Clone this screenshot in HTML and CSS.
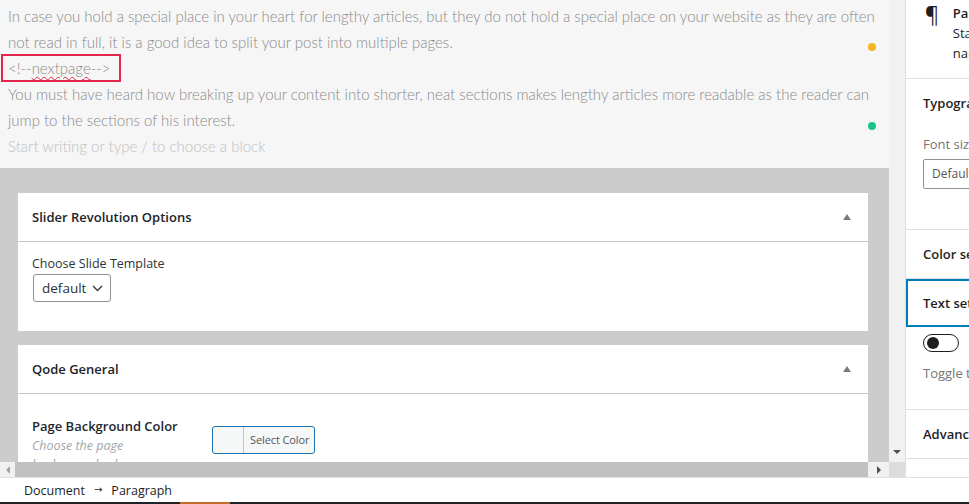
FILE: index.html
```html
<!DOCTYPE html>
<html lang="en">
<head>
    <meta charset="UTF-8"/>
    <meta name="viewport" content="width=device-width,initial-scale=1"/>
    <title>Edit Post</title>
    <link rel="stylesheet" href="styles.css">
</head>
<body>
<div class="workspace">
    <div class="editor">
        <div class="canvas">
            <div class="post">
                <p>In case you hold a special place in your heart for lengthy articles, but they do not hold a special place on your website as they are often not read in full, it is a good idea to split your post into multiple pages.</p>
                <p><span class="more">&lt;!--<span class="typo">nextpage</span>--&gt;</span></p>
                <p>You must have heard how breaking up your content into shorter, neat sections makes lengthy articles more readable as the reader can jump to the sections of his interest.</p>
                <p class="placeholder">Start writing or type / to choose a block</p>
                <span class="dot dot-orange"></span>
                <span class="dot dot-green"></span>
            </div>
            <div class="metaboxes">
                <section class="metabox">
                    <header class="metabox-head">
                        <h2>Slider Revolution Options</h2>
                        <span class="caret"></span>
                    </header>
                    <div class="metabox-body">
                        <div class="field-label">Choose Slide Template</div>
                        <div class="select">
                            default
                            <svg width="11" height="7" viewBox="0 0 11 7"><path d="M1 1l4.5 4.5L10 1" fill="none" stroke="#3c434a" stroke-width="1.5"/></svg>
                        </div>
                    </div>
                </section>
                <section class="metabox">
                    <header class="metabox-head">
                        <h2>Qode General</h2>
                        <span class="caret"></span>
                    </header>
                    <div class="metabox-body option-row">
                        <div class="option-label">
                            <div class="option-title">Page Background Color</div>
                            <div class="option-desc">Choose the page background color</div>
                        </div>
                        <div class="color-btn">
                            <span class="swatch"></span>
                            <span class="color-text">Select Color</span>
                        </div>
                    </div>
                </section>
            </div>
        </div>
        <div class="vscroll">
            <span class="arrow arrow-down"></span>
        </div>
        <div class="hscroll">
            <span class="hbtn"><span class="arrow arrow-left"></span></span>
            <span class="thumb"></span>
            <span class="hbtn"><span class="arrow arrow-right"></span></span>
        </div>
        <div class="corner"></div>
    </div>

    <aside class="sidebar">
        <div class="block-card">
            <span class="pilcrow">&para;</span>
            <div>
                <div class="block-name">Paragraph</div>
                <div class="block-desc">Start with the building block of all narrative.</div>
            </div>
        </div>
        <div class="panel">
            <div class="panel-head">Typography</div>
            <div class="panel-body typo-body">
                <div class="muted">Font size</div>
                <div class="size-select">Default</div>
            </div>
        </div>
        <div class="panel">
            <div class="panel-head">Color settings</div>
        </div>
        <div class="panel">
            <div class="panel-head is-focused">Text settings</div>
            <div class="panel-body text-body">
                <div class="toggle-row">
                    <span class="toggle"><span class="knob"></span></span>
                    <span>Drop cap</span>
                </div>
                <div class="muted">Toggle to show a large initial letter.</div>
            </div>
        </div>
        <div class="panel">
            <div class="panel-head">Advanced</div>
        </div>
    </aside>
</div>
<footer class="footer">
    <span>Document</span>
    <span class="sep">&rarr;</span>
    <span>Paragraph</span>
</footer>
<div class="taskbar"><span class="task-active"></span></div>
</body>
</html>
```

FILE: styles.css
```css
body { margin: 0; width: 969px; height: 504px; overflow: hidden; background: #fff; font-family: "Open Sans", "Liberation Sans", sans-serif; color: #1e1e1e; }
p { margin: 0; }

.workspace { display: flex; height: 477px; overflow: hidden; }
.editor { flex: none; display: grid; grid-template-columns: 889px 16px; grid-template-rows: 462px 15px; }
.canvas { overflow: hidden; background: #cccccc; }

/* post content */
.post { position: relative; background: #f6f6f6; padding: 3px 8px 9px 8px; font-family: Lato, "Liberation Sans", sans-serif; font-size: 15px; font-weight: 300; line-height: 26px; color: #8a8a8a; }
.more { display: inline-block; margin-left: -6px; padding: 0 9px 0 6px; outline: 2px solid #e2264d; outline-offset: -1px; }
.typo { text-decoration: underline wavy #e2264d; text-decoration-thickness: 1px; text-underline-offset: 2px; }
.placeholder { color: #c0c0c0; }
.dot { position: absolute; right: 13px; width: 8px; height: 8px; border-radius: 50%; }
.dot-orange { top: 43px; background: #f5b625; }
.dot-green { top: 122px; background: #1cc28d; }

/* meta boxes */
.metaboxes { padding: 25px 21px 0 18px; display: flex; flex-direction: column; gap: 14px; }
.metabox { background: #fff; }
.metabox-head { display: flex; align-items: center; justify-content: space-between; height: 48px; padding: 0 17px 0 14px; border-bottom: 1px solid #c8c8c8; }
.metabox-head h2 { margin: 0; font-size: 13px; font-weight: 600; color: #1d2327; }
.caret { width: 0; height: 0; border-left: 4px solid transparent; border-right: 4px solid transparent; border-bottom: 6px solid #787c82; }
.metabox-body { padding: 12px 14px 29px; font-size: 12.5px; line-height: 20px; color: #2c3338; }
.select { display: inline-flex; align-items: center; gap: 6px; height: 26px; margin-left: 1px; padding: 0 7px 0 8px; border: 1px solid #8c8f94; border-radius: 3px; font-size: 13.5px; color: #2c3338; }

.option-row { display: grid; grid-template-columns: 180px auto; align-items: start; padding-top: 22px; padding-bottom: 40px; }
.option-title { font-size: 13px; font-weight: 600; color: #23282d; }
.option-desc { max-width: 140px; font-style: italic; color: #a0a5aa; line-height: 19px; }
.color-btn { display: inline-flex; width: 101px; height: 26px; margin-top: 10px; border: 1px solid #2271b1; border-radius: 3px; background: #f6f7f7; overflow: hidden; }
.swatch { flex: none; width: 30px; border-right: 1px solid #c3c4c7; }
.color-text { flex: 1; padding-left: 6px; font-size: 11px; letter-spacing: -0.1px; line-height: 26px; white-space: nowrap; color: #50575e; }

/* scrollbars */
.vscroll { background: #f1f1f1; display: flex; flex-direction: column; justify-content: flex-end; align-items: center; padding-bottom: 8px; }
.hscroll { display: flex; background: #f1f1f1; }
.hbtn { width: 15px; display: flex; align-items: center; justify-content: center; }
.thumb { flex: none; width: 853px; background: #c1c1c1; }
.hscroll .hbtn:last-child { margin-left: auto; width: 21px; }
.corner { background: #dcdcdc; }
.arrow { width: 0; height: 0; }
.arrow-down { border-left: 4px solid transparent; border-right: 4px solid transparent; border-top: 4px solid #505050; }
.arrow-left { border-top: 4px solid transparent; border-bottom: 4px solid transparent; border-right: 4px solid #a3a3a3; }
.arrow-right { border-top: 4px solid transparent; border-bottom: 4px solid transparent; border-left: 4px solid #505050; }

/* settings sidebar */
.sidebar { flex: none; width: 280px; border-left: 1px solid #e0e0e0; font-size: 13px; line-height: 20px; }
.block-card { display: flex; gap: 11px; padding: 3px 16px 15px; border-bottom: 1px solid #e0e0e0; }
.pilcrow { width: 24px; font-size: 22px; line-height: 20px; text-align: center; }
.block-name { font-weight: 600; }
.panel { border-bottom: 1px solid #e0e0e0; }
.panel-head { height: 48px; display: flex; align-items: center; padding: 0 17px; font-weight: 600; }
.panel-head.is-focused { box-shadow: inset 0 0 0 2px #007cba; }
.panel-body { padding: 0 17px; }
.muted { color: #757575; }
.typo-body { padding-top: 7px; padding-bottom: 40px; }
.size-select { width: 200px; height: 28px; margin-top: 5px; padding-left: 8px; border: 1px solid #8c8f94; border-radius: 2px; line-height: 28px; font-size: 12px; color: #555; }
.text-body { padding-top: 6px; padding-bottom: 26px; }
.toggle-row { display: flex; align-items: center; gap: 12px; margin-bottom: 10px; }
.toggle { position: relative; width: 36px; height: 18px; border: 1px solid #1e1e1e; border-radius: 10px; box-sizing: border-box; }
.knob { position: absolute; left: 3px; top: 2px; width: 12px; height: 12px; border-radius: 50%; background: #1e1e1e; }

.footer { display: flex; align-items: center; gap: 9px; height: 24px; border-top: 1px solid #e0e0e0; padding-left: 24px; font-size: 12.5px; color: #1e1e1e; }
.sep { font-family: "DejaVu Sans", sans-serif; font-size: 10px; line-height: 12px; }
.taskbar { height: 2px; background: #1d2327; }
.task-active { display: block; width: 50px; height: 2px; margin-left: 180px; background: #c46a2a; }
```
